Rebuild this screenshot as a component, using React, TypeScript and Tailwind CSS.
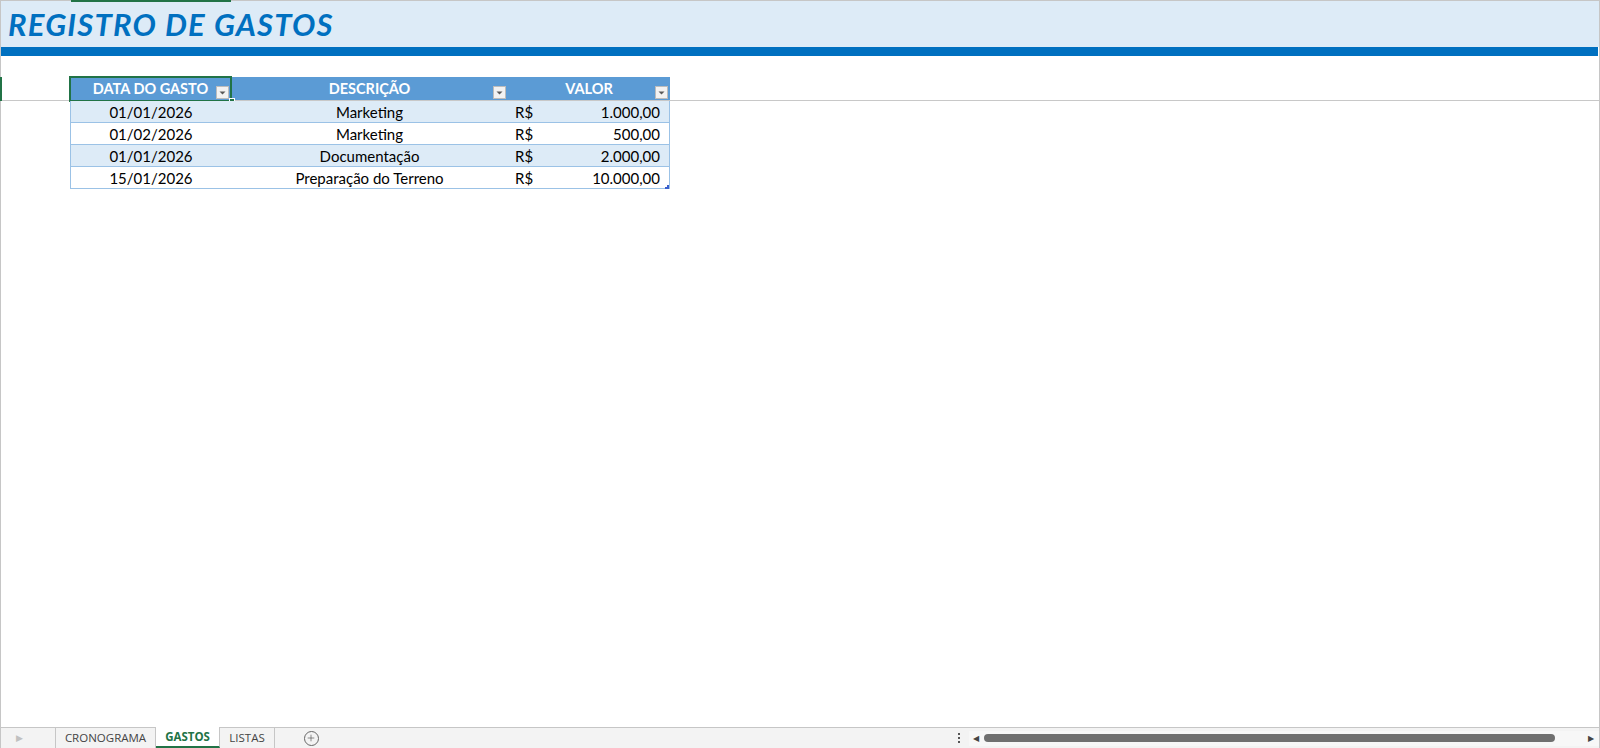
import { Plus } from 'lucide-react';

interface Gasto {
	data: string;
	descricao: string;
	valor: string;
}

const gastos: Gasto[] = [
	{ data: '01/01/2026', descricao: 'Marketing', valor: '1.000,00' },
	{ data: '01/02/2026', descricao: 'Marketing', valor: '500,00' },
	{ data: '01/01/2026', descricao: 'Documentação', valor: '2.000,00' },
	{ data: '15/01/2026', descricao: 'Preparação do Terreno', valor: '10.000,00' },
];

const FilterButton = () => (
	<span className="absolute right-[2px] bottom-[1px] w-[13px] h-[13px] bg-[#f2f2f2] border border-[#bcbcbc] flex items-center justify-center">
		<svg width="7" height="4" viewBox="0 0 7 4">
			<path d="M0.5 0.5 L6.5 0.5 L3.5 3.5 Z" fill="#595959" />
		</svg>
	</span>
);

const HeaderCell = ({ label, selected }: { label: string; selected?: boolean }) => (
	<div className="relative flex items-center justify-center text-white font-bold">
		{label}
		<FilterButton />
		{selected && (
			<>
				<span className="absolute -left-[1px] -top-[1px] -right-[1px] -bottom-[2px] border-2 border-[#217346]" />
				<span className="absolute -right-[4px] -bottom-[4px] w-[6px] h-[6px] bg-[#217346] border border-white" />
			</>
		)}
	</div>
);

export default function App() {
	return (
		<div className="relative w-[1600px] h-[748px] flex flex-col bg-white border-l border-r border-t border-[#c6c6c6] font-['Lato',sans-serif]">
			{/* selected column / row markers */}
			<span className="absolute left-[70px] -top-[1px] w-[160px] h-[2px] bg-[#217346]" />
			<span className="absolute -left-[1px] top-[76px] w-[2px] h-[24px] bg-[#217346]" />

			<div className="h-[46px] bg-[#DDEBF7] flex items-center pl-[7px]">
				<h1 className="text-[31px] font-bold italic text-[#0070C0] leading-none tracking-[1.2px]">
					REGISTRO DE GASTOS
				</h1>
			</div>
			<div className="h-[9px] bg-[#0070C0] mr-[1px]" />

			{/* frozen pane with the table header */}
			<div className="h-[45px] border-b border-[#c8c8c8] flex items-end pl-[69px]">
				<div className="grid grid-cols-[161px_277px_162px] h-[23px] bg-[#5B9BD5] text-[14.5px]">
					<HeaderCell label="DATA DO GASTO" selected />
					<HeaderCell label="DESCRIÇÃO" />
					<HeaderCell label="VALOR" />
				</div>
			</div>

			<div className="flex-1 pl-[69px]">
				<div className="relative w-[600px] border-l border-r border-[#9BC2E6] text-[15px] text-black">
					{gastos.map((g, i) => (
						<div
							key={i}
							className={`grid grid-cols-[160px_277px_161px] h-[22px] border-b border-[#9BC2E6] ${i % 2 === 0 ? 'bg-[#DDEBF7]' : 'bg-white'}`}
						>
							<div className="flex items-center justify-center">{g.data}</div>
							<div className="flex items-center justify-center">{g.descricao}</div>
							<div className="flex items-center justify-between pl-[7px] pr-[9px]">
								<span>R$</span>
								<span>{g.valor}</span>
							</div>
						</div>
					))}
					{/* table resize handle */}
					<span className="absolute right-0 bottom-0 w-[4px] h-[4px] border-r-2 border-b-2 border-[#3a5fcd]" />
				</div>
			</div>

			{/* sheet tabs and horizontal scrollbar */}
			<div className="h-[21px] border-t border-[#c6c6c6] bg-[#f3f3f3] flex text-[11.5px] font-['Open_Sans',sans-serif]">
				<div className="w-[55px] border-r border-[#c6c6c6] flex items-center pl-[15px] text-[#c0c0c0] text-[9px]">▶</div>
				<div className="w-[100px] border-r border-[#c6c6c6] flex items-center justify-center text-[#444]">CRONOGRAMA</div>
				<div className="w-[64px] -mt-[1px] bg-white border-r border-[#c6c6c6] border-b-2 border-b-[#217346] flex items-center justify-center font-bold text-[#217346]">
					GASTOS
				</div>
				<div className="w-[55px] border-r border-[#c6c6c6] flex items-center justify-center text-[#444]">LISTAS</div>
				<div className="w-[72px] flex items-center justify-center">
					<span className="w-[15px] h-[15px] rounded-full border border-[#666] flex items-center justify-center">
						<Plus size={10} strokeWidth={1.6} color="#555" />
					</span>
				</div>
				<div className="flex-1" />
				<div className="w-[650px] flex items-center">
					<div className="w-[20px] flex flex-col items-center gap-[2px]">
						<span className="w-[2px] h-[2px] bg-[#555]" />
						<span className="w-[2px] h-[2px] bg-[#555]" />
						<span className="w-[2px] h-[2px] bg-[#555]" />
					</div>
					<div className="flex-1 flex items-center h-[15px] bg-[#f7f7f7]">
						<span className="ml-[4px] text-[8px] text-[#444]">◀</span>
						<span className="ml-[5px] w-[571px] h-[8px] rounded-full bg-[#6f6f6f]" />
						<span className="flex-1" />
						<span className="mr-[5px] text-[8px] text-[#444]">▶</span>
					</div>
				</div>
			</div>
		</div>
	);
}
